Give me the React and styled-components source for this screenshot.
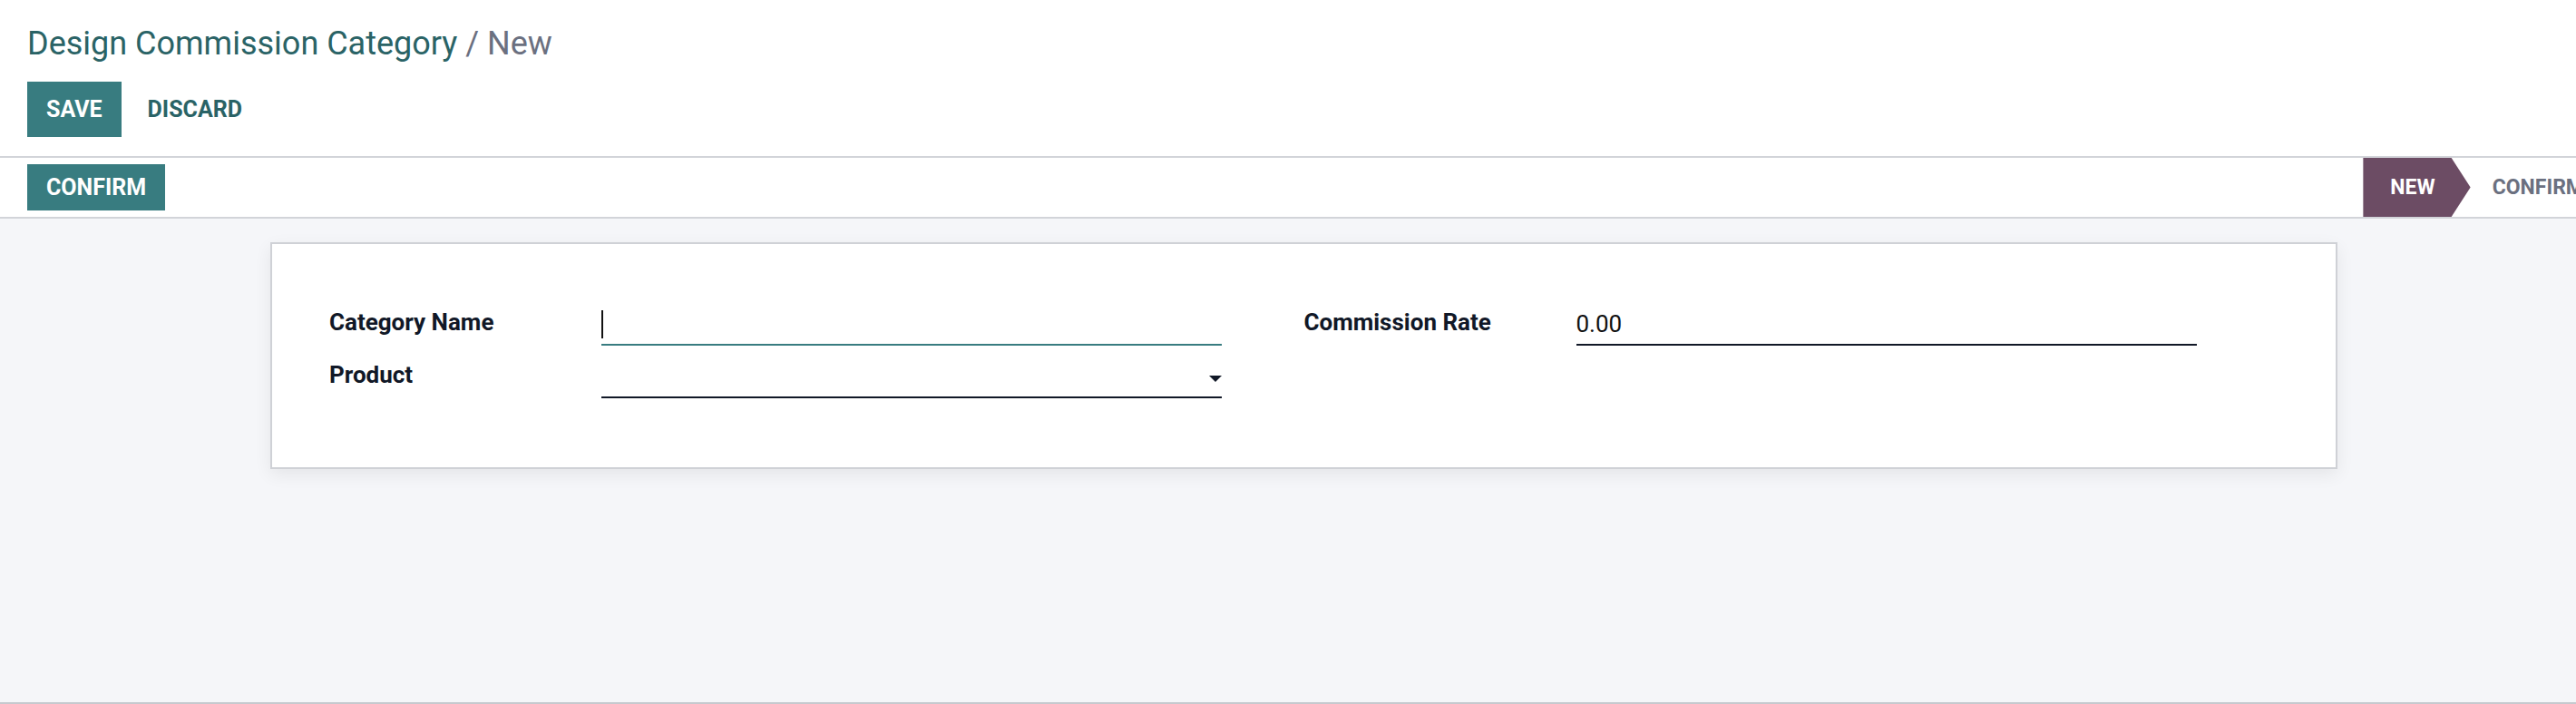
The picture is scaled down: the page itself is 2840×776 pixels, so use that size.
import React from "react";
import styled, { createGlobalStyle } from "styled-components";

const Global = createGlobalStyle`
  html, body { margin: 0; padding: 0; overflow: hidden; background: #fff; }
  body { font-family: Roboto, "Liberation Sans", sans-serif; }
  * { box-sizing: border-box; }
`;

const Page = styled.div`
  width: 2875px;
  height: 776px;
  display: flex;
  flex-direction: column;
  background: #fff;
`;

const Header = styled.div`
  padding: 27px 30px 21px;
  border-bottom: 2px solid #d2d4d9;
`;

const Title = styled.h1`
  margin: 0 0 21px;
  font-size: 36px;
  line-height: 42px;
  font-weight: 400;
  color: #2a6366;
`;

const Crumb = styled.span`
  color: #6b7080;
`;

const ButtonRow = styled.div`
  display: flex;
  gap: 8px;
`;

const Button = styled.button`
  height: ${(p) => p.$h || 61}px;
  padding: 0 21px;
  border: none;
  margin: 0;
  font-family: inherit;
  font-size: 25px;
  font-weight: 700;
  text-transform: uppercase;
  cursor: pointer;
  background: ${(p) => (p.$primary ? "#387c80" : "transparent")};
  color: ${(p) => (p.$primary ? "#fff" : "#2a6366")};
`;

const StatusBar = styled.div`
  height: 67px;
  display: flex;
  align-items: center;
  justify-content: space-between;
  padding-left: 30px;
  border-bottom: 2px solid #d2d4d9;
`;

const Steps = styled.div`
  display: flex;
  align-self: stretch;
`;

const Step = styled.div`
  display: flex;
  align-items: center;
  font-size: 23px;
  font-weight: 700;
  text-transform: uppercase;
  color: ${(p) => (p.$active ? "#fff" : "#6b7080")};
  background: ${(p) => (p.$active ? "#6c4c64" : "transparent")};
  padding: ${(p) => (p.$active ? "0 39px 0 30px" : "0 26px 0 24px")};
  clip-path: ${(p) =>
    p.$active
      ? "polygon(0 0, calc(100% - 21px) 0, 100% 50%, calc(100% - 21px) 100%, 0 100%)"
      : "none"};
`;

const Content = styled.div`
  flex: 1;
  background: #f5f6f9;
  padding-top: 26px;
  border-bottom: 2px solid #c6c9ce;
`;

const Sheet = styled.div`
  width: 2279px;
  margin: 0 auto;
  background: #fff;
  border: 2px solid #cfd1d6;
  box-shadow: 0 6px 18px rgba(0, 0, 0, 0.07);
  padding: 71px 63px 76px;
  display: grid;
  grid-template-columns: 1fr 1fr;
`;

const Group = styled.div`
  display: grid;
  grid-template-columns: 300px 684px;
  row-gap: 17px;
  align-items: start;
`;

const Label = styled.label`
  font-size: 26px;
  line-height: 31px;
  font-weight: 700;
  color: #111827;
`;

const Field = styled.div`
  height: 41px;
  padding: 2px 0 6px;
  display: flex;
  align-items: flex-start;
  border-bottom: 2px solid ${(p) => (p.$focused ? "#387c80" : "#111827")};
  font-size: 26px;
  line-height: 31px;
  color: #111;
`;

const Caret = styled.span`
  width: 2px;
  height: 31px;
  background: #111;
`;

const DropArrow = styled.span`
  margin-left: auto;
  margin-top: 14px;
  width: 0;
  height: 0;
  border-left: 7.5px solid transparent;
  border-right: 7.5px solid transparent;
  border-top: 7px solid #111827;
`;

export default function App() {
  return (
    <Page>
      <Global />
      <Header>
        <Title>
          Design Commission Category <Crumb>/ New</Crumb>
        </Title>
        <ButtonRow>
          <Button $primary>Save</Button>
          <Button>Discard</Button>
        </ButtonRow>
      </Header>
      <StatusBar>
        <Button $primary $h={51}>Confirm</Button>
        <Steps>
          <Step $active>New</Step>
          <Step>Confirm</Step>
        </Steps>
      </StatusBar>
      <Content>
        <Sheet>
          <Group>
            <Label>Category Name</Label>
            <Field $focused>
              <Caret />
            </Field>
            <Label>Product</Label>
            <Field>
              <DropArrow />
            </Field>
          </Group>
          <Group>
            <Label>Commission Rate</Label>
            <Field>0.00</Field>
          </Group>
        </Sheet>
      </Content>
    </Page>
  );
}
